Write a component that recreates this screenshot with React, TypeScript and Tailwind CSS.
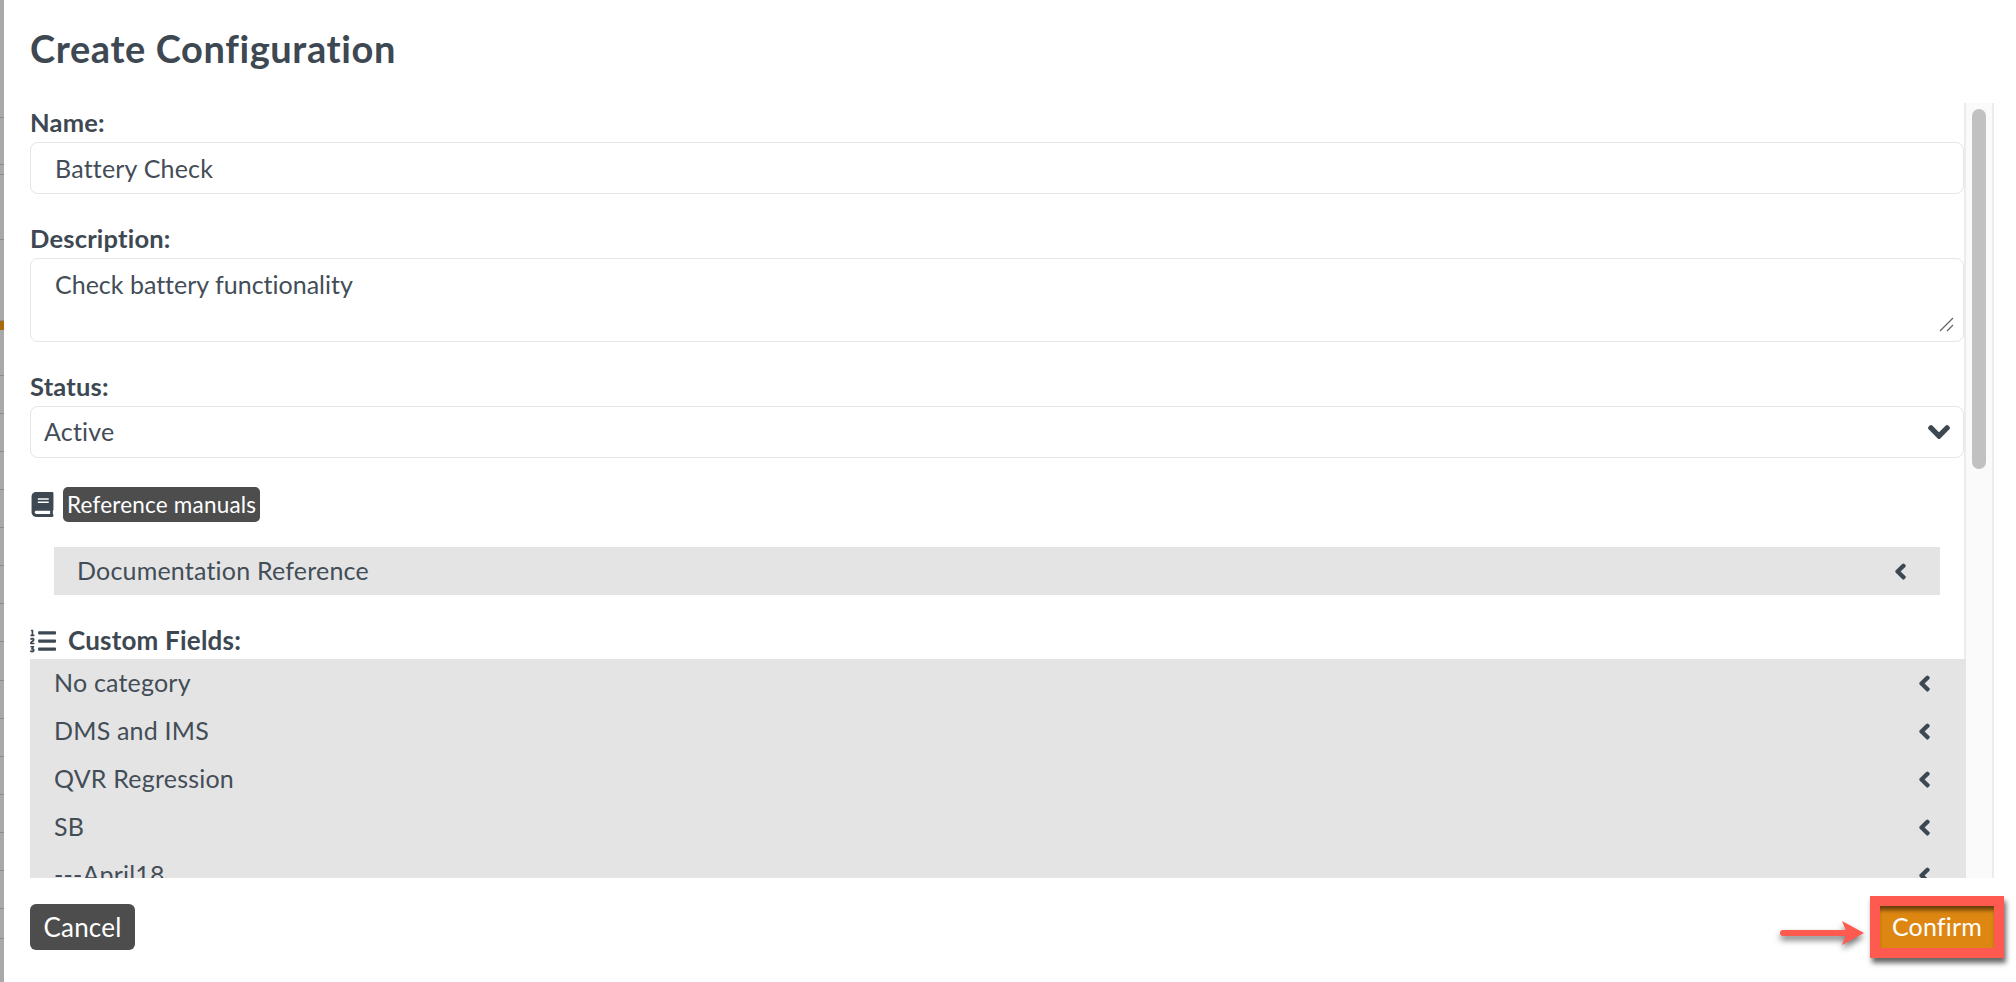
import { FaBook, FaChevronDown, FaChevronLeft, FaListOl } from "react-icons/fa";

const categories = ["No category", "DMS and IMS", "QVR Regression", "SB", "---April18"];

// rows of the page behind the dialog, only a sliver of it shows on the left
const backdropRows = [118, 47, 10, 65, 81, 9, 46, 38, 38, 38, 38, 38, 38, 38, 39, 38, 38, 38, 38, 38, 38, 30];

function Backdrop() {
  return (
    <div className="flex w-[4px] shrink-0 flex-col bg-[#a8a9a9]">
      {backdropRows.map((h, i) =>
        i === 5 ? (
          <div key={i} className="shrink-0 bg-[#a8690f]" style={{ height: h }} />
        ) : (
          <div key={i} className="shrink-0 border-b border-[#8c8e90]" style={{ height: h }} />
        ),
      )}
    </div>
  );
}

function CollapseRow({ label }: { label: string }) {
  return (
    <div className="flex h-[48px] shrink-0 items-center justify-between pr-[33px] pl-[24px]">
      <span>{label}</span>
      <FaChevronLeft className="text-[17px] text-[#3d4852]" stroke="currentColor" strokeWidth={50} />
    </div>
  );
}

export default function App() {
  return (
    <div className="flex h-screen w-screen overflow-hidden bg-white font-['Lato','Liberation_Sans',sans-serif] text-[25px] tracking-[0.2px] text-[#434d57] [font-variant-ligatures:none]">
      <Backdrop />
      <div className="flex min-w-0 flex-1 flex-col">
        <h1 className="h-[103px] shrink-0 pt-[24px] pl-[26px] text-[38px] leading-[48px] font-bold tracking-[0.6px] text-[#3d4852]">
          Create Configuration
        </h1>

        <div className="flex h-[775px] shrink-0 pl-[26px]">
          <div className="flex w-[1934px] shrink-0 flex-col">
            <label className="mt-[5px] h-[34px] text-[25.5px] leading-[28px] font-bold text-[#3d4852]">Name:</label>
            <input
              defaultValue="Battery Check"
              className="h-[52px] shrink-0 rounded-[8px] border border-[#e6e6e6] pl-[24px] text-[#434d57] outline-none"
            />
            <label className="mt-[34px] h-[30px] text-[25.5px] leading-[20px] font-bold text-[#3d4852]">Description:</label>
            <div className="relative h-[84px] shrink-0">
              <textarea
                defaultValue="Check battery functionality"
                className="h-full w-full resize-none rounded-[8px] border border-[#e6e6e6] px-[24px] pt-[7px] tracking-[0px] text-[#434d57] outline-none"
              />
              <svg width="16" height="16" viewBox="0 0 16 16" className="absolute right-[9px] bottom-[10px]">
                <path d="M1 15L14 2M8 15L14 9" stroke="#666" strokeWidth="1.3" fill="none" />
              </svg>
            </div>
            <label className="mt-[30px] h-[34px] text-[25.5px] leading-[28px] font-bold text-[#3d4852]">Status:</label>
            <div className="flex h-[52px] shrink-0 items-center justify-between rounded-[8px] border border-[#e6e6e6] pr-[12px] pl-[13px]">
              <span>Active</span>
              <FaChevronDown className="text-[24px] text-[#3d4852]" stroke="currentColor" strokeWidth={30} />
            </div>

            <div className="mt-[29px] flex h-[35px] shrink-0 items-center gap-[8px]">
              <FaBook className="text-[25px] text-[#3d4852]" />
              <span className="rounded-[5px] bg-[#4d4d4d] px-[4px] text-[22.5px] leading-[35px] text-white">
                Reference manuals
              </span>
            </div>

            <div className="mt-[25px] mr-[24px] ml-[24px] flex h-[48px] shrink-0 items-center justify-between bg-[#e4e4e4] pr-[31px] pl-[23px]">
              <span>Documentation Reference</span>
              <FaChevronLeft className="text-[17px] text-[#3d4852]" stroke="currentColor" strokeWidth={50} />
            </div>

            <div className="mt-[27px] flex h-[37px] shrink-0 items-center gap-[12px]">
              <FaListOl className="text-[26px] text-[#3d4852]" />
              <span className="text-[26px] font-bold text-[#3d4852]">Custom Fields:</span>
            </div>

            <div className="relative z-10 mr-[-2px] flex min-h-0 flex-1 flex-col overflow-hidden bg-[#e4e4e4]">
              {categories.map((c) => (
                <CollapseRow key={c} label={c} />
              ))}
            </div>
          </div>

          <div className="w-[30px] shrink-0 border-x-2 border-[#ececec] bg-[#fafafa] px-[6px] pt-[6px]">
            <div className="h-[360px] rounded-full bg-[#c1c1c1]" />
          </div>
        </div>

        <div className="flex flex-1 items-start justify-between pr-[12px] pl-[26px]">
          <button className="mt-[26px] h-[46px] w-[105px] rounded-[6px] bg-[#4d4d4d] text-[26px] text-white">Cancel</button>
          <div className="mt-[18px] flex items-center gap-[6px]">
            <svg width="84" height="30" viewBox="0 0 84 30" className="mt-[12px] drop-shadow-[0_4px_3px_rgba(0,0,0,0.55)]">
              <path d="M3 15H66" stroke="#ff5a4f" strokeWidth="6" strokeLinecap="round" />
              <path d="M62 3L84 15L62 27L67 15Z" fill="#ff5a4f" />
            </svg>
            <div className="border-[10px] border-[#ff5a4f] shadow-[2px_5px_5px_rgba(0,0,0,0.6)]">
              <button className="h-[42px] w-[114px] bg-[#dd8712] text-[25px] text-white shadow-[inset_0_6px_4px_-2px_rgba(0,0,0,0.55)]">
                Confirm
              </button>
            </div>
          </div>
        </div>
      </div>
    </div>
  );
}
